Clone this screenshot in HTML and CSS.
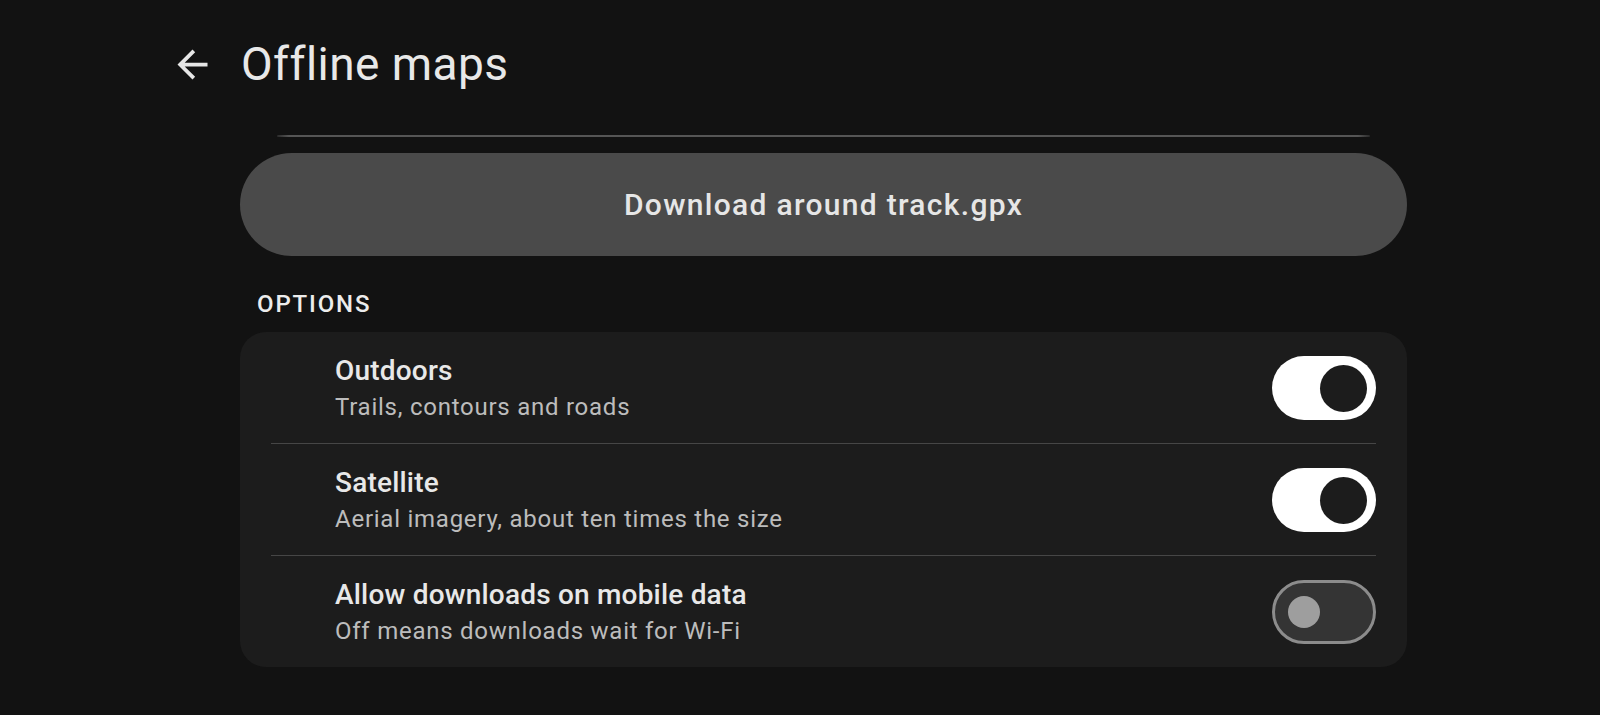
FILE: index.html
```html
<!DOCTYPE html>
<html lang="en">
<head>
<meta charset="utf-8">
<title>Offline maps</title>
<link rel="stylesheet" href="styles.css">
</head>
<body>
  <header class="app-bar">
    <button class="back" aria-label="Back">
      <svg viewBox="0 0 24 24" width="45" height="45" aria-hidden="true">
        <path d="M20 11H7.83l5.59-5.59L12 4l-8 8 8 8 1.41-1.41L7.83 13H20v-2z" fill="#e6e6e6"/>
      </svg>
    </button>
    <h1 class="title">Offline maps</h1>
  </header>

  <main class="content">
    <div class="scroll-edge"></div>

    <button class="download">Download around track.gpx</button>

    <h2 class="section-label">OPTIONS</h2>

    <section class="card">
      <div class="row">
        <div class="row-text">
          <div class="row-title">Outdoors</div>
          <div class="row-sub">Trails, contours and roads</div>
        </div>
        <span class="switch on"><span class="thumb"></span></span>
      </div>
      <div class="divider"></div>
      <div class="row">
        <div class="row-text">
          <div class="row-title">Satellite</div>
          <div class="row-sub">Aerial imagery, about ten times the size</div>
        </div>
        <span class="switch on"><span class="thumb"></span></span>
      </div>
      <div class="divider"></div>
      <div class="row">
        <div class="row-text">
          <div class="row-title">Allow downloads on mobile data</div>
          <div class="row-sub">Off means downloads wait for Wi-Fi</div>
        </div>
        <span class="switch off"><span class="thumb"></span></span>
      </div>
    </section>
  </main>
</body>
</html>
```

FILE: styles.css
```css
* {
  box-sizing: border-box;
}

html, body {
  margin: 0;
  padding: 0;
  background: #121212;
  color: #e8e8e8;
  font-family: Roboto, "Noto Sans", "Liberation Sans", sans-serif;
}

body {
  width: 1600px;
  height: 715px;
  overflow: hidden;
}

/* top app bar */
.app-bar {
  height: 126px;
  padding: 2px 0 0 170px;
  display: flex;
  align-items: center;
}

.back {
  width: 45px;
  height: 45px;
  padding: 0;
  margin: 0;
  border: 0;
  background: none;
  display: flex;
}

.title {
  margin: 0 0 0 26px;
  font-size: 46px;
  line-height: 54px;
  font-weight: 400;
  letter-spacing: 0.45px;
  color: #e8e8e8;
}

/* page column */
.content {
  margin-left: 240px;
  width: 1167px;
}

.scroll-edge {
  margin: 9px 37px 0 37px;
  height: 2px;
  border-radius: 1px;
  background: linear-gradient(90deg, #2a2a2a 0, #555 12px, #555 calc(100% - 12px), #2a2a2a 100%);
}

.download {
  display: block;
  width: 100%;
  height: 103px;
  margin-top: 16px;
  border: 0;
  border-radius: 52px;
  background: #4a4a4a;
  color: #e6e6e6;
  font-family: inherit;
  font-size: 30px;
  font-weight: 500;
  letter-spacing: 1.3px;
}

.section-label {
  margin: 34px 0 0 17px;
  font-size: 24px;
  line-height: 28px;
  font-weight: 500;
  letter-spacing: 1.85px;
  color: #ececec;
}

/* settings card */
.card {
  margin-top: 14px;
  background: #1c1c1c;
  border-radius: 26px;
}

.row {
  height: 111px;
  padding: 1px 31px 0 95px;
  display: flex;
  align-items: center;
  justify-content: space-between;
}

.row-title {
  font-size: 28px;
  line-height: 36px;
  font-weight: 500;
  letter-spacing: 0.2px;
  color: #e8e8e8;
}

.row-sub {
  margin-top: 2px;
  font-size: 24px;
  line-height: 32px;
  letter-spacing: 0.75px;
  color: #bcbcbc;
}

.divider {
  height: 1px;
  margin: 0 31px;
  background: #464646;
}

/* switches */
.switch {
  width: 104px;
  height: 64px;
  border-radius: 32px;
  display: flex;
  align-items: center;
  flex-shrink: 0;
}

.switch.on {
  background: #ffffff;
  justify-content: flex-end;
  padding-right: 9px;
}

.switch.on .thumb {
  width: 47px;
  height: 47px;
  border-radius: 50%;
  background: #1c1c1c;
}

.switch.off {
  background: #343434;
  border: 3px solid #8c8c8c;
  padding-left: 13px;
}

.switch.off .thumb {
  width: 32px;
  height: 32px;
  border-radius: 50%;
  background: #9e9e9e;
}
```
